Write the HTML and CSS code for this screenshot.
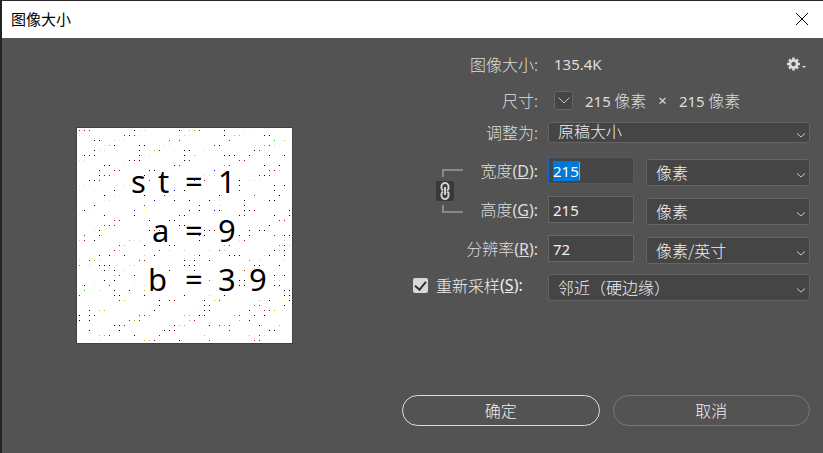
FILE: index.html
```html
<!DOCTYPE html>
<html lang="zh-CN">
<head>
<meta charset="utf-8">
<title>图像大小</title>
<link rel="stylesheet" href="styles.css">
</head>
<body>
<main class="dialog">
  <header class="titlebar">
    <h1>图像大小</h1>
    <button class="close" type="button" aria-label="关闭"><svg width="12" height="12" viewBox="0 0 12 12"><path d="M0 0L12 12M12 0L0 12"/></svg></button>
  </header>
  <div class="content">
    <svg class="preview" viewBox="0 0 215 215" role="img" aria-label="预览">
      <g class="sketch">
        <text x="54" y="65">s</text><text x="81" y="65">t</text><text x="108" y="65">=</text><text x="141" y="65">1</text>
        <text x="75" y="114">a</text><text x="108" y="114">=</text><text x="141" y="114">9</text>
        <text x="71" y="163">b</text><text x="108" y="163">=</text><text x="141" y="163">3</text><text x="172" y="163">9</text>
      </g>
      <g id="dots" shape-rendering="crispEdges"></g>
    </svg>
    <form class="form">
      <span class="label">图像大小:</span>
      <div class="info">
        <output class="num">135.4K</output>
        <button class="gear" type="button" aria-label="设置">
          <svg width="20" height="14" viewBox="0 0 20 14"><circle cx="6.500" cy="7" r="3.500" fill="none" stroke="#dcdcdc" stroke-width="2.600"/><path d="M6.500 .5V3M6.500 11v2.500M0 7h2.500M10.500 7H13M2 2.500l1.800 1.800M9.200 9.700L11 11.500M11 2.500L9.200 4.300M3.800 9.700L2 11.500" stroke="#dcdcdc" stroke-width="2.600"/><path d="M15 9h4l-2 2z" fill="#dcdcdc"/></svg>
        </button>
      </div>

      <span class="label">尺寸:</span>
      <div class="info dims">
        <button class="unit" type="button" aria-label="单位"><svg width="12" height="7" viewBox="0 0 12 7"><path d="M.5 .5L6 6l5.500-5.500"/></svg></button>
        <span><span class="num">215</span> 像素</span><span class="num">×</span><span><span class="num">215</span> 像素</span>
      </div>

      <label class="label short" for="fit">调整为:</label>
      <div class="select low"><select id="fit"><option>原稿大小</option></select><svg viewBox="0 0 8 5"><path d="M0 .5l4 3.500 4-3.500"/></svg></div>

      <div class="link">
        <span class="arm top"></span>
        <button type="button" aria-label="约束长宽比"><svg width="10" height="18" viewBox="0 0 10 18"><path d="M1.500 7V4.500a3.500 3.500 0 0 1 7 0V7L7 8.500M1.500 11v2.500a3.500 3.500 0 0 0 7 0V11L7 9.500M1.500 7L3 8.500M1.500 11L3 9.500M5 5v8"/></svg></button>
        <span class="arm bottom"></span>
      </div>
      <label class="label r4" for="w">宽度<span class="key">(<u>D</u>):</span></label>
      <div class="pair r4">
        <input class="field active" id="w" type="text" value="215">
        <div class="select"><select aria-label="宽度单位"><option>像素</option></select><svg viewBox="0 0 8 5"><path d="M0 .5l4 3.500 4-3.500"/></svg></div>
      </div>
      <label class="label r5" for="h">高度<span class="key">(<u>G</u>):</span></label>
      <div class="pair r5">
        <input class="field" id="h" type="text" value="215">
        <div class="select"><select aria-label="高度单位"><option>像素</option></select><svg viewBox="0 0 8 5"><path d="M0 .5l4 3.500 4-3.500"/></svg></div>
      </div>
      <label class="label" for="res">分辨率<span class="key">(<u>R</u>):</span></label>
      <div class="pair">
        <input class="field" id="res" type="text" value="72">
        <div class="select"><select aria-label="分辨率单位"><option>像素/英寸</option></select><svg viewBox="0 0 8 5"><path d="M0 .5l4 3.500 4-3.500"/></svg></div>
      </div>
      <label class="resample"><input type="checkbox" checked>重新采样<span class="key">(<u>S</u>):</span></label>
      <div class="select"><select aria-label="重新采样"><option>邻近（硬边缘）</option></select><svg viewBox="0 0 8 5"><path d="M0 .5l4 3.500 4-3.500"/></svg></div>

      <div class="actions">
        <button class="primary" type="submit">确定</button>
        <button type="button">取消</button>
      </div>
    </form>
  </div>
</main>
<script src="script.js"></script>
</body>
</html>
```
FILE: styles.css
```css
* { box-sizing: border-box; }
body {
  margin: 0;
  background: #535353;
  color: #dedede;
  font: 300 16px/26px "Noto Sans CJK SC", sans-serif;
}
button, input, select { font: inherit; color: inherit; }
button { padding: 0; border: 0; background: none; }
svg { display: block; }
.num, .key, .field { font-family: "Noto Sans", "Noto Sans CJK SC", sans-serif; font-size: 15px; font-weight: 400; }
.key { font-size: 16px; line-height: 20px; }
.dialog { min-height: 100vh; border-left: 2px solid #242424; border-top: 1px solid #2a282a; }
.titlebar {
  display: flex;
  align-items: center;
  justify-content: space-between;
  height: 37px;
  padding: 0 15px 2px 9px;
  background: #fff;
  color: #000;
}
.titlebar h1 { margin: 0; font-size: 15px; font-weight: 400; }
.close svg { overflow: visible; stroke: #000; stroke-width: 1; }
.content {
  display: grid;
  grid-template-columns: minmax(217px, 1fr) 408px;
  gap: 35px;
  padding: 13px 13px 0 0;
}
.preview { width: 217px; justify-self: center; margin-top: 76px; border: 1px solid #424242; background: #fff; align-self: start; }
.sketch { font: 400 31px "Noto Sans", sans-serif; fill: #000; }
.form {
  display: grid;
  grid-template-columns: 61px 75px 1fr;
  grid-template-rows: 36px 35px 35px 39px 39px 39px 28px;
  align-items: start;
}
.label { grid-column: 1 / 3; text-align: right; white-space: nowrap; }
.label.short { line-height: 20px; }
.info, .pair, .form > .select { grid-column: 3; margin-left: 10px; }
.r4 { grid-row: 4; }
.r5 { grid-row: 5; }
.info { display: flex; justify-content: space-between; align-items: center; height: 26px; padding: 0 3px 0 6px; }
.dims { justify-content: flex-start; gap: 12px; }
.unit {
  display: grid;
  place-items: center;
  width: 19px;
  height: 19px;
  border: 1px solid #666;
  border-radius: 3px;
  background: #454545;
}
.unit svg, .select svg { fill: none; stroke: #c8c8c8; }
.select { position: relative; height: 27px; }
.select.low { height: 21px; }
.select select {
  display: block;
  width: 100%;
  height: 100%;
  padding: 0 24px 2px 9px;
  appearance: none;
  border: 1px solid #646464;
  border-radius: 3px;
  background: #454545;
  color: #f0f0f0;
  line-height: 22px;
}
.select.low select { padding-bottom: 3px; line-height: 16px; }
.select svg { position: absolute; right: 5px; top: 50%; width: 8px; height: 5px; overflow: visible; pointer-events: none; }
.pair { display: grid; grid-template-columns: 86px 1fr; gap: 12px; }
.pair .select { margin-top: 2px; }
.field {
  width: 100%;
  height: 27px;
  padding: 0 4px;
  border: 1px solid #666;
  border-radius: 0;
  outline: 0;
  background: #454545;
  color: #f0f0f0;
  line-height: 18px;
}
.field.active { border-color: #1464d2; background: linear-gradient(#f08a3c, #f08a3c) 30px 4px / 1px 18px no-repeat #454545; }
.field::selection { background: #0078d7; color: #fff; }
.link { grid-column: 1; grid-row: 4 / 6; margin: 12px 0 0 34px; }
.link button { display: grid; place-items: center; width: 18px; height: 20px; margin: 4px 0; border-radius: 2px; background: #383838; }
.link button svg { fill: none; stroke: #d0d0d0; stroke-width: 2; }
.arm { display: block; height: 8px; margin-left: 6px; width: 21px; border-left: 2px solid #888; }
.arm.top { border-top: 2px solid #888; }
.arm.bottom { border-bottom: 2px solid #888; }
.resample { grid-column: 1 / 3; display: flex; align-items: center; height: 22px; margin-left: 11px; white-space: nowrap; color: #f0f0f0; }
.resample input {
  flex: none;
  width: 15px;
  height: 15px;
  margin: 0 8px 0 0;
  appearance: none;
  border-radius: 2px;
  background: #d8d8d8;
  display: grid;
  place-items: center;
}
.resample input:checked::after {
  content: "";
  width: 5px;
  height: 9px;
  margin-bottom: 2px;
  border: solid #303030;
  border-width: 0 2px 2px 0;
  rotate: 40deg;
}
.actions { grid-column: 1 / -1; display: grid; grid-template-columns: 1fr 1fr; gap: 13px; margin-top: 93px; }
.actions button { height: 31px; padding-bottom: 1px; border: 1px solid #787878; border-radius: 16px; color: #f0f0f0; }
.actions .primary { border-color: #dcdcdc; }
```
FILE: script.js
```js
// Each row lists column index + colour key; marks sit on a 5px lattice.
const colours = { k: "#000", r: "#c00000", p: "#ffc0ff", s: "#ffc0c0", g: "#c0ffc0", G: "#00c000", b: "#0000d0", l: "#c0c0ff", y: "#ffff20", o: "#c0c000", c: "#00c0c0", m: "#c000c0" };
const rows = [
  "0r 1r 2r 11k 12s 13s 20k 22o 23o 24r 29k 33p 34p",
  "0p 9r 10k 11r 20g 21s 22s 29k 31o 32o 37k 38k",
  "3k 4k 7p 8p 9p 18r 20r 30r 39G 41o 42g",
  "5p 6o 7k 12k 13k 16p 17p 18p 27r 28k 37c 38r 39s",
  "3k 4s 5s 12k 15o 16r 21k 22k 25p 26p 35k 36r 37p",
  "1k 2r 3k 12k 14s 21k 23o 29k 30k 31k 34k 38k 41k",
  "0p 1p 10k 11r 12k 21k 22r 32r 33r",
  "5k 6k 9p 10p 19k 20r 29c 30r 37k 38s 40k",
  "4k 7r 8r 14k 15k 17p 18p 27b 28y 29s 38r 39r 40s",
  "4k 5r 6r 13k 25p 26p 27p 36b 37k 38r",
  "2b 3k 4r 14r 23b 25r 32k 34p 35p 36p",
  "0p 1p 2p 9p 10p 32k 39k 41k",
  "0g 7k 19b 20y 21k 32r 39k 42g",
  "5k 7g 8g 13k 17r 18p 19p 28k 35r 40k",
  "5g 6g 15b 16g 17g 19k 22k 26k 27p 28p 33k 37p 38k 39k",
  "3k 4y 13m 14g 15g 24b 25g 26g 28g 33k",
  "1k 2p 11b 13y 22k 24k 27b 28k 29g 33k 34b 35r 36g 37g 42k",
  "0g 5k 11k 20b 21k 32k 33r 39k 42k",
  "7r 8r 9g 14k 18k 19k 20p 29b 30y 40r 41r",
  "5r 6r 7r 20k 21k 38k 39y",
  "3p 4k 5y 14k 15r 16r 25k 26r 27r 34k 36k 37k",
  "1r 4k 5y 24r 25k 26p 32k 34k 39r 41k 42k",
  "0l 1r 3k 10o 11p 12p 22y 24k 32p 33r 41l",
  "8r 9o 13k 18k 19r 23p 29o 30r 40G 41k 42l",
  "6p 7r 8l 16r 18l 21l 26l 28r 29l 37p 39k 40y 41k",
  "4k 6k 9k 13l 15k 23l 24k 30k 31k 32k 37p 38k 41k",
  "0l 2r 3o 4l 12r 13r 21k 22y 23k 26k 34G 36l 41l",
  "0G 2l 4k 5k 6k 10l 11l 21k 22k 23k 24l 32y 35k 36k 40k",
  "5k 7k 9l 18k 22l 23k 32y 33r",
  "7l 8r 11k 38l 39k 41k",
  "5k 6y 7k 26G 32k 33k 39l 40l",
  "1k 3p 6r 11p 13l 32k 33k 39k 40k",
  "1G 4l 7k 10k 13o 24y 41k 42k",
  "0r 7k 8k 13k 21k 26l 29k 41k 42k",
  "8r 9o 16k 18b 19r 25k 27o 28r 36o 38k 41y 42k",
  "6y 7y 16k 25k 26r 35o 36r 41k",
  "2k 4o 5o 14p 15k 16y 23p 25k 26r 34k 37r 38r 39o",
  "0k 2k 3r 12r 13r 14o 21o 22o 24k 25k 31o 32r 35k 37k",
  "0k 2k 10r 11o 12r 22o 23r 32o 34k",
  "7k 8k 9r 18p 19k 20o 21o 26k 28r 29o 30r 36k 40o",
  "2k 6p 7p 8k 17k 18k 19r 28g 30r 38k 39k",
  "4o 5o 6r 11k 16r 25o 34o 36r 37s",
  "2y 3p 4s 13o 14o 15r 20k 26r 35r 36r"
];
const layer = document.getElementById("dots");
rows.forEach((row, j) => row.split(" ").forEach((mark) => {
  const dot = document.createElementNS("http://www.w3.org/2000/svg", "rect");
  dot.setAttribute("x", parseInt(mark, 10) * 5 + 2);
  dot.setAttribute("y", j * 5 + 2);
  dot.setAttribute("width", 1);
  dot.setAttribute("height", 1);
  dot.setAttribute("fill", colours[mark.slice(-1)]);
  layer.append(dot);
}));
const width = document.getElementById("w");
width.focus();
width.select();
```
